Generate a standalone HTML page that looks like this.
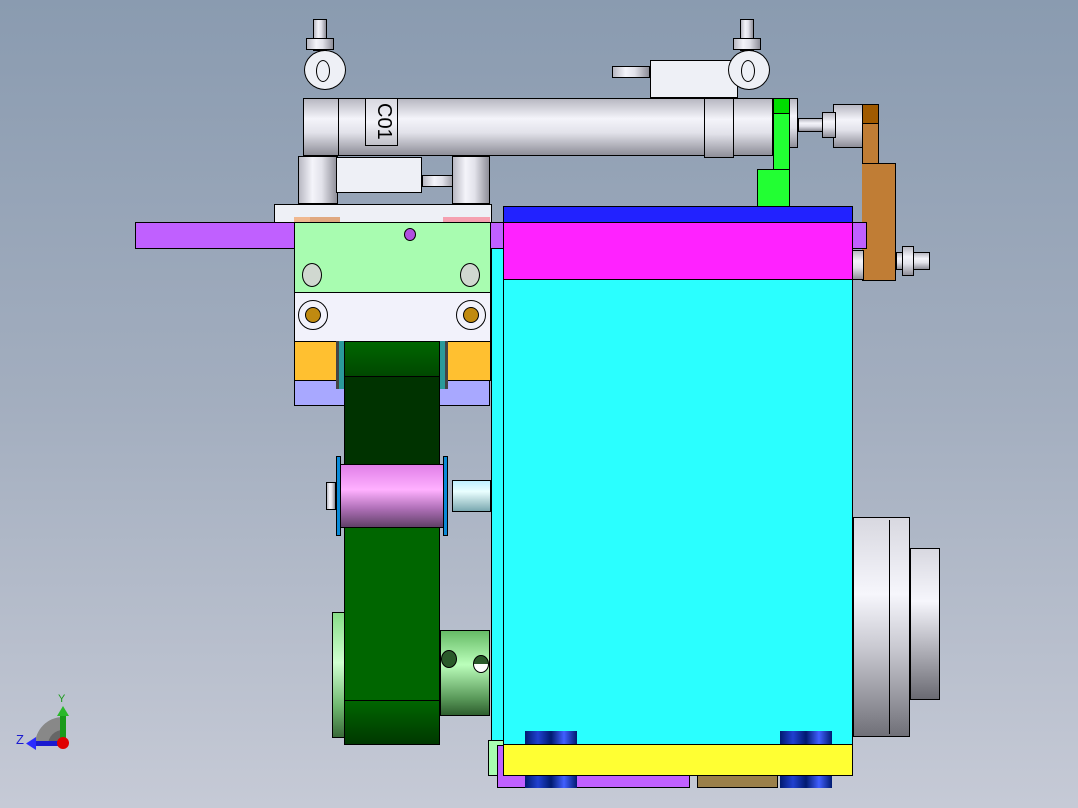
<!DOCTYPE html>
<html><head><meta charset="utf-8"><style>
html,body{margin:0;padding:0}
body{width:1078px;height:808px;position:relative;overflow:hidden;background:linear-gradient(#8a9bb0 0%,#a3aebf 50%,#c6cad6 100%);font-family:"Liberation Sans",sans-serif}
div{position:absolute;box-sizing:border-box}
.b{border:1px solid #000}
.cyl{background:linear-gradient(#b8b8c2,#f4f4fa 35%,#e2e2ea 60%,#8e8e98)}
.cylv{background:linear-gradient(90deg,#b8b8c2,#f4f4fa 35%,#e2e2ea 60%,#8e8e98)}
.scr{border-radius:50%;border:1px solid #000}
</style></head><body>

<div class="b cylv" style="left:313px;top:19px;width:14px;height:32px"></div>
<div class="b cylv" style="left:306px;top:38px;width:28px;height:12px"></div>
<div class="b" style="left:304px;top:50px;width:42px;height:40px;border-radius:50%;background:#eef0f6"></div>
<div class="b" style="left:316px;top:60px;width:14px;height:22px;border-radius:50%;background:#eef0f6"></div>
<div class="b cylv" style="left:740px;top:19px;width:14px;height:32px"></div>
<div class="b cylv" style="left:733px;top:38px;width:28px;height:12px"></div>
<div class="b" style="left:650px;top:60px;width:88px;height:38px;background:#eef0f6"></div>
<div class="b cylv" style="left:612px;top:66px;width:38px;height:12px"></div>
<div class="b" style="left:728px;top:50px;width:42px;height:40px;border-radius:50%;background:#eef0f6"></div>
<div class="b" style="left:741px;top:60px;width:14px;height:22px;border-radius:50%;background:#eef0f6"></div>

<div class="b cyl" style="left:337px;top:98px;width:372px;height:58px"></div>
<div class="b" style="left:365px;top:98px;width:33px;height:48px;background:linear-gradient(#d8d8e0,#f4f4fa,#c0c0c8)"></div>
<div style="left:366px;top:100px;width:30px;height:36px;font-size:20px;transform:rotate(90deg);line-height:30px;text-align:center">C01</div>
<div class="b cyl" style="left:303px;top:98px;width:36px;height:58px"></div>
<div class="b cyl" style="left:704px;top:98px;width:30px;height:60px"></div>
<div class="b cyl" style="left:733px;top:98px;width:40px;height:58px"></div>
<div class="b cyl" style="left:773px;top:98px;width:25px;height:50px"></div>
<div class="b cyl" style="left:798px;top:118px;width:26px;height:14px"></div>
<div class="b cyl" style="left:833px;top:104px;width:30px;height:44px"></div>
<div class="b cyl" style="left:822px;top:112px;width:14px;height:26px"></div>

<div class="b cylv" style="left:298px;top:156px;width:40px;height:48px"></div>
<div class="b" style="left:336px;top:157px;width:86px;height:36px;background:#eef0f6"></div>
<div class="b cylv" style="left:422px;top:175px;width:34px;height:12px"></div>
<div class="b cylv" style="left:452px;top:156px;width:38px;height:48px"></div>
<div class="b" style="left:274px;top:204px;width:218px;height:20px;background:#eef0f6"></div>
<div style="left:294px;top:217px;width:16px;height:6px;background:#f0b890"></div>
<div style="left:310px;top:217px;width:30px;height:6px;background:#e0a880"></div>
<div style="left:443px;top:217px;width:47px;height:6px;background:#f5a0b0"></div>

<div class="b" style="left:773px;top:98px;width:17px;height:16px;background:#00dd00"></div>
<div class="b" style="left:773px;top:113px;width:17px;height:58px;background:#22ff33"></div>
<div class="b" style="left:757px;top:169px;width:33px;height:41px;background:#22ff33"></div>
<div class="b" style="left:862px;top:104px;width:17px;height:20px;background:#a05a00"></div>
<div class="b" style="left:862px;top:123px;width:17px;height:158px;background:#c07d35"></div>
<div style="left:862px;top:163px;width:34px;height:118px;background:#c07d35;border:1px solid #000;border-left:none"></div>
<div class="b cyl" style="left:896px;top:252px;width:34px;height:18px"></div>
<div class="b cyl" style="left:902px;top:246px;width:12px;height:30px"></div>
<div class="b cyl" style="left:852px;top:250px;width:12px;height:30px"></div>

<div class="b" style="left:135px;top:222px;width:160px;height:27px;background:#c060ff"></div>
<div class="b" style="left:489px;top:222px;width:15px;height:27px;background:#c060ff"></div>
<div class="b" style="left:851px;top:222px;width:16px;height:27px;background:#c060ff"></div>

<div class="b" style="left:491px;top:248px;width:14px;height:498px;background:#2affff"></div>
<div class="b" style="left:503px;top:206px;width:350px;height:17px;background:#2222ff"></div>
<div class="b" style="left:503px;top:222px;width:350px;height:58px;background:#ff22ff"></div>
<div class="b" style="left:503px;top:279px;width:350px;height:467px;background:#2affff"></div>

<div class="b" style="left:294px;top:222px;width:197px;height:71px;background:#a8fcb0"></div>
<div class="b" style="left:404px;top:228px;width:12px;height:13px;border-radius:50%;background:#b050e0"></div>
<div class="scr" style="left:302px;top:263px;width:20px;height:24px;background:#d0d8d0"></div>
<div class="scr" style="left:460px;top:263px;width:20px;height:24px;background:#d0d8d0"></div>
<div class="b" style="left:294px;top:292px;width:197px;height:50px;background:#f2f2fb"></div>
<div class="scr" style="left:298px;top:300px;width:30px;height:30px;background:#f2f2fb"></div>
<div class="scr" style="left:305px;top:307px;width:16px;height:16px;background:#c08a10"></div>
<div class="scr" style="left:456px;top:300px;width:30px;height:30px;background:#f2f2fb"></div>
<div class="scr" style="left:463px;top:307px;width:16px;height:16px;background:#c08a10"></div>
<div class="b" style="left:294px;top:341px;width:197px;height:40px;background:#ffc030"></div>
<div class="b" style="left:294px;top:380px;width:196px;height:26px;background:#a8a8ff"></div>
<div style="left:336px;top:341px;width:10px;height:48px;background:#2a9a9a;border-left:3px solid #444"></div>
<div style="left:438px;top:341px;width:10px;height:48px;background:#2a9a9a;border-right:3px solid #444"></div>

<div class="b" style="left:344px;top:341px;width:96px;height:36px;background:linear-gradient(#006600,#004800)"></div>
<div class="b" style="left:344px;top:376px;width:96px;height:92px;background:#003300"></div>

<div class="b" style="left:332px;top:612px;width:108px;height:126px;background:linear-gradient(#88dd88,#d0ffd0 40%,#70b870 75%,#3a6a3a)"></div>
<div class="b" style="left:440px;top:630px;width:50px;height:86px;background:linear-gradient(#66bb66,#bbffbb 40%,#5a9a5a 80%,#2e5e2e)"></div>
<div class="b" style="left:344px;top:526px;width:96px;height:176px;background:#006600"></div>
<div class="b" style="left:344px;top:700px;width:96px;height:45px;background:linear-gradient(#006600,#003800)"></div>
<div class="scr" style="left:441px;top:650px;width:16px;height:18px;background:#2a5a2a"></div>
<div class="scr" style="left:473px;top:655px;width:16px;height:18px;background:linear-gradient(#2a5a2a 50%,#fff 50%)"></div>

<div class="b" style="left:452px;top:480px;width:39px;height:32px;background:linear-gradient(#bfefff,#eaffff 35%,#7aa8b0)"></div>
<div class="b" style="left:340px;top:464px;width:104px;height:64px;background:linear-gradient(#e080e8,#ffb0ff 40%,#b070b8 70%,#604068)"></div>
<div class="b" style="left:336px;top:456px;width:5px;height:80px;background:#0a8ad8"></div>
<div class="b" style="left:443px;top:456px;width:5px;height:80px;background:#0a8ad8"></div>
<div class="b cylv" style="left:326px;top:482px;width:10px;height:28px"></div>

<div class="b" style="left:853px;top:517px;width:57px;height:220px;background:linear-gradient(#d8d8e0,#f6f6fc 35%,#c8c8d0 60%,#707078)"></div>
<div style="left:889px;top:520px;width:1px;height:214px;background:#000"></div>
<div class="b" style="left:910px;top:548px;width:30px;height:152px;background:linear-gradient(#d8d8e0,#f6f6fc 35%,#c0c0c8 60%,#6a6a72)"></div>

<div class="b" style="left:488px;top:740px;width:16px;height:36px;background:#a8fcb0"></div>
<div class="b" style="left:497px;top:745px;width:193px;height:43px;background:#c060ff"></div>
<div class="b" style="left:697px;top:775px;width:81px;height:13px;background:#9a7f4a"></div>
<div style="left:525px;top:731px;width:52px;height:57px;background:linear-gradient(90deg,#001a70,#2040d0,#001a70,#4060ff,#001a70)"></div>
<div style="left:780px;top:731px;width:52px;height:57px;background:linear-gradient(90deg,#001a70,#2040d0,#001a70,#4060ff,#001a70)"></div>
<div class="b" style="left:503px;top:744px;width:350px;height:32px;background:#ffff33"></div>

<svg style="position:absolute;left:10px;top:680px" width="70" height="70" viewBox="0 0 70 70">
<path d="M25 65 A28 28 0 0 1 53 37 L53 65 Z" fill="#888"/>
<path d="M38 65 A15 15 0 0 1 53 50 L53 65 Z" fill="#666"/>
<rect x="50" y="34" width="6" height="28" fill="#1a9a1a"/>
<polygon points="47,36 59,36 53,26" fill="#2ab82a"/>
<rect x="24" y="61" width="30" height="5" fill="#1a1ad0"/>
<polygon points="26,57 26,70 16,63.5" fill="#2a2aff"/>
<circle cx="53" cy="63" r="6" fill="#e00000"/>
<text x="48" y="22" font-size="11" fill="#1a9a1a" font-family="Liberation Sans">Y</text>
<text x="6" y="64" font-size="13" fill="#1a1ad0" font-family="Liberation Sans">Z</text>
</svg>
</body></html>
